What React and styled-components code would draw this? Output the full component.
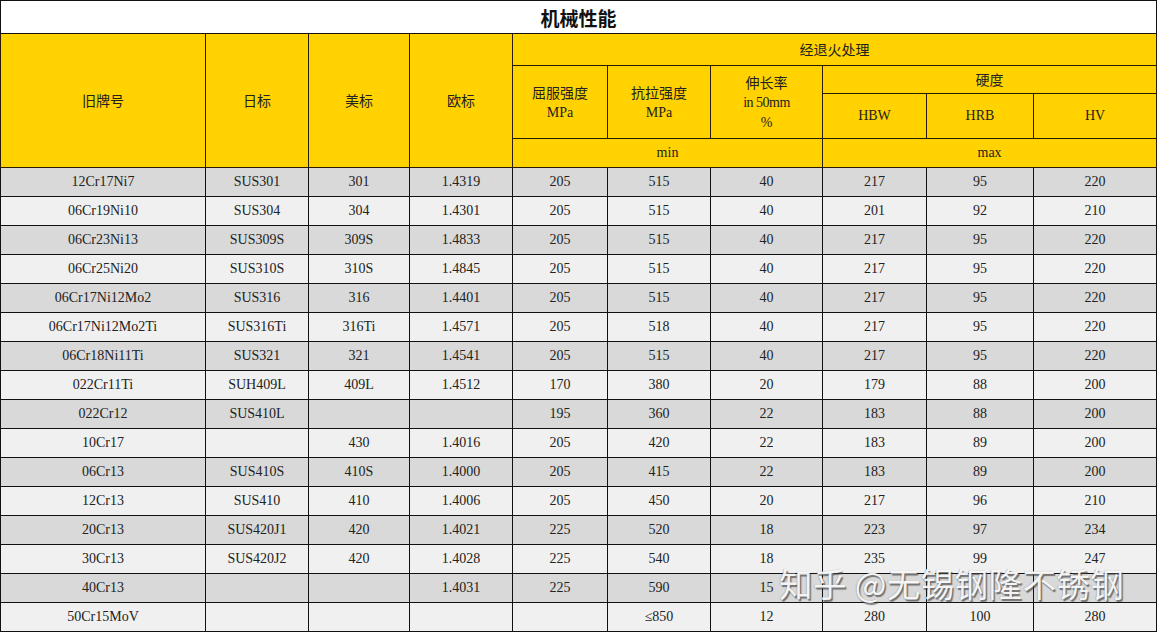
import React from "react";
import styled, { createGlobalStyle } from "styled-components";

const GlobalStyle = createGlobalStyle`
  html, body {
    margin: 0;
    padding: 0;
    background: #ffffff;
  }
  body {
    font-family: "Liberation Serif", "Noto Sans CJK SC", serif;
    color: #1c1c1c;
  }
`;

const Wrap = styled.div`
  position: relative;
  width: 1157px;
  height: 632px;
  overflow: hidden;
`;

const Table = styled.table`
  border-collapse: collapse;
  table-layout: fixed;
  width: 1156px;
  border: 1px solid #111;
  font-size: 14px;
`;

const Title = styled.th`
  height: 32px;
  padding: 0;
  background: #fff;
  font-family: "Noto Sans CJK SC", sans-serif;
  font-weight: 700;
  font-size: 19px;
  color: #111;
  border: 1px solid #111;
`;

const Head = styled.th`
  padding: 0;
  background: #ffd200;
  font-weight: 400;
  font-family: "Noto Sans CJK SC", "Liberation Serif", sans-serif;
  font-size: 14px;
  line-height: 21px;
  color: #222;
  border: 1px solid #2a1a00;
  text-align: center;
  vertical-align: middle;
`;

const Latin = styled.span`
  display: block;
  font-family: "Liberation Serif", serif;
  font-size: 14px;
  letter-spacing: ${(p) => (p.tight ? "-0.5px" : "0")};
  line-height: 20px;
`;

const Row = styled.tr`
  height: 29px;
  background: ${(p) => (p.shade ? "#d9d9d9" : "#f0f0f0")};
`;

const Cell = styled.td`
  padding: 0;
  border: 1px solid #111;
  text-align: center;
  vertical-align: middle;
  font-size: 14px;
  color: #222;
`;

const Watermark = styled.div`
  position: absolute;
  left: 779px;
  top: 566px;
  font-family: "Noto Sans CJK SC", sans-serif;
  font-size: 33.5px;
  line-height: 33px;
  color: rgba(255, 255, 255, 0.93);
  letter-spacing: 0.4px;
  text-shadow: 1.5px 1.5px 1px rgba(70, 70, 70, 0.7), -0.5px -0.5px 1px rgba(90, 90, 90, 0.45);
  white-space: pre;
  pointer-events: none;
`;

const widths = [205, 103, 101, 103, 95, 103, 112, 104, 107, 123];

const rows = [
  ["12Cr17Ni7", "SUS301", "301", "1.4319", "205", "515", "40", "217", "95", "220"],
  ["06Cr19Ni10", "SUS304", "304", "1.4301", "205", "515", "40", "201", "92", "210"],
  ["06Cr23Ni13", "SUS309S", "309S", "1.4833", "205", "515", "40", "217", "95", "220"],
  ["06Cr25Ni20", "SUS310S", "310S", "1.4845", "205", "515", "40", "217", "95", "220"],
  ["06Cr17Ni12Mo2", "SUS316", "316", "1.4401", "205", "515", "40", "217", "95", "220"],
  ["06Cr17Ni12Mo2Ti", "SUS316Ti", "316Ti", "1.4571", "205", "518", "40", "217", "95", "220"],
  ["06Cr18Ni11Ti", "SUS321", "321", "1.4541", "205", "515", "40", "217", "95", "220"],
  ["022Cr11Ti", "SUH409L", "409L", "1.4512", "170", "380", "20", "179", "88", "200"],
  ["022Cr12", "SUS410L", "", "", "195", "360", "22", "183", "88", "200"],
  ["10Cr17", "", "430", "1.4016", "205", "420", "22", "183", "89", "200"],
  ["06Cr13", "SUS410S", "410S", "1.4000", "205", "415", "22", "183", "89", "200"],
  ["12Cr13", "SUS410", "410", "1.4006", "205", "450", "20", "217", "96", "210"],
  ["20Cr13", "SUS420J1", "420", "1.4021", "225", "520", "18", "223", "97", "234"],
  ["30Cr13", "SUS420J2", "420", "1.4028", "225", "540", "18", "235", "99", "247"],
  ["40Cr13", "", "", "1.4031", "225", "590", "15", "", "", ""],
  ["50Cr15MoV", "", "", "", "", "≤850", "12", "280", "100", "280"],
];

export default function App() {
  return (
    <>
      <GlobalStyle />
      <Wrap>
        <Table>
          <colgroup>
            {widths.map((w, i) => (
              <col key={i} style={{ width: w }} />
            ))}
          </colgroup>
          <thead>
            <tr>
              <Title colSpan={10}>机械性能</Title>
            </tr>
            <tr style={{ height: 32 }}>
              <Head rowSpan={4}>旧牌号</Head>
              <Head rowSpan={4}>日标</Head>
              <Head rowSpan={4}>美标</Head>
              <Head rowSpan={4}>欧标</Head>
              <Head colSpan={6}>经退火处理</Head>
            </tr>
            <tr style={{ height: 28 }}>
              <Head rowSpan={2}>
                屈服强度
                <Latin>MPa</Latin>
              </Head>
              <Head rowSpan={2}>
                抗拉强度
                <Latin>MPa</Latin>
              </Head>
              <Head rowSpan={2}>
                伸长率
                <Latin tight>in 50mm</Latin>
                <Latin>%</Latin>
              </Head>
              <Head colSpan={3}>硬度</Head>
            </tr>
            <tr style={{ height: 45 }}>
              <Head>
                <Latin>HBW</Latin>
              </Head>
              <Head>
                <Latin>HRB</Latin>
              </Head>
              <Head>
                <Latin>HV</Latin>
              </Head>
            </tr>
            <tr style={{ height: 29 }}>
              <Head colSpan={3}>
                <Latin>min</Latin>
              </Head>
              <Head colSpan={3}>
                <Latin>max</Latin>
              </Head>
            </tr>
          </thead>
          <tbody>
            {rows.map((r, i) => (
              <Row key={r[0]} shade={i % 2 === 0 ? 1 : 0}>
                {r.map((v, j) => (
                  <Cell key={j}>{v}</Cell>
                ))}
              </Row>
            ))}
          </tbody>
        </Table>
        <Watermark>知乎 @无锡钢隆不锈钢</Watermark>
      </Wrap>
    </>
  );
}
